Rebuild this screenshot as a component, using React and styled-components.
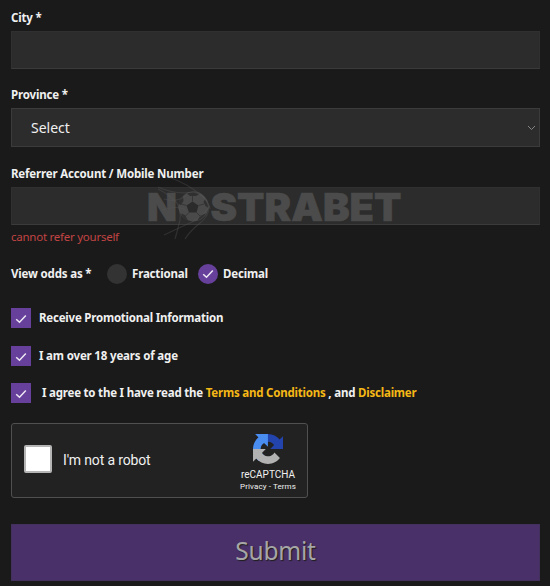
import React, { useState } from "react";
import styled, { createGlobalStyle } from "styled-components";

const GlobalStyle = createGlobalStyle`
    * {
        box-sizing: border-box;
    }

    body {
        margin: 0;
        background: #1A1A1A;
        color: #F0F0F0;
        font-family: "Noto Sans", "Open Sans", sans-serif;
    }
`;

const Form = styled.form`
    position: relative;
    width: 550px;
    height: 586px;
    padding: 9px 10px 0 11px;
    overflow: hidden;
`;

const Text = styled.span`
    display: inline-block;
    font-size: 11.5px;
    font-weight: 700;
    line-height: 18px;
    letter-spacing: ${(p) => p.$track || -0.17}px;
    white-space: pre;
`;

const Field = styled.div`
    display: flex;
    flex-direction: column;
    height: ${(p) => p.$height}px;
`;

const Input = styled.input`
    width: 100%;
    height: 38px;
    margin-top: 4px;
    padding: 0 19px;
    border: 1px solid #303030;
    border-bottom-color: #3B3B3B;
    border-radius: 0;
    background: #2C2C2C;
    color: #F0F0F0;
    outline: none;
`;

const Select = styled.button`
    display: flex;
    align-items: center;
    justify-content: space-between;
    width: 100%;
    height: 39px;
    margin-top: 4px;
    padding: 0 3px 0 19px;
    border: 1px solid #3B3B3B;
    background: #2C2C2C;
    color: #F0F0F0;
    font: 14px/20px "Noto Sans", sans-serif;
`;

const ErrorText = styled(Text)`
    margin-top: 3px;
    color: #C24444;
    font-weight: 400;
`;

const Odds = styled.div`
    display: flex;
    align-items: center;
    height: 20px;

    ${Text} {
        padding-bottom: 1px;
    }
`;

const OddsTitle = styled.div`
    display: flex;
    width: 96px;
`;

const Radio = styled.label`
    display: flex;
    align-items: center;
    gap: 5px;
    width: 91px;
`;

const Dot = styled.span`
    display: flex;
    align-items: center;
    justify-content: center;
    width: 20px;
    height: 20px;
    border-radius: 50%;
    background: ${(p) => (p.$on ? "#66409A" : "#333333")};
`;

const Checks = styled.div`
    display: flex;
    flex-direction: column;
    gap: 18px;
    height: 95px;
    margin-top: 24px;
`;

const Check = styled.div`
    display: flex;
    align-items: center;
    height: 20px;
    gap: ${(p) => p.$gap || 8}px;

    &:last-child {
        margin-top: -1px;
    }
`;

const Box = styled.span`
    display: flex;
    align-items: center;
    justify-content: center;
    width: 20px;
    height: 20px;
    padding-top: 1px;
    background: #66409A;
`;

const Link = styled.span`
    color: #F5B816;
`;

const Captcha = styled.div`
    display: flex;
    align-items: center;
    width: 297px;
    height: 75px;
    margin-top: 20px;
    padding: 0 10px 0 12px;
    border: 1px solid #505050;
    border-radius: 3px;
    background: #222222;
    font-family: Roboto, sans-serif;
`;

const RobotBox = styled.span`
    width: 28px;
    height: 28px;
    margin-top: -3px;
    border: 2px solid #B5B5B5;
    border-radius: 2px;
    background: #FFFFFF;
`;

const RobotLabel = styled.span`
    flex: 1;
    margin-left: 11px;
    padding-bottom: 1px;
    font-size: 14px;
    line-height: 20px;
    letter-spacing: -0.15px;
`;

const Badge = styled.div`
    display: flex;
    flex-direction: column;
    align-items: center;
    width: 58px;
    padding-top: 4px;
    white-space: nowrap;
`;

const BadgeName = styled.span`
    margin-top: 5px;
    font-size: 10px;
    line-height: 12px;
`;

const BadgeTerms = styled.span`
    font-size: 8px;
    line-height: 11px;
    letter-spacing: 0.1px;
`;

const Submit = styled.button`
    display: block;
    width: 100%;
    height: 57px;
    margin-top: 26px;
    padding: 0 0 3px;
    border: 1px solid #43305D;
    background: #4A3069;
    color: #A6A6A6;
    font: 24.5px/52px "Noto Sans", sans-serif;
    letter-spacing: -0.2px;
    text-shadow: 1px 1px 1px #1E1E1E;
`;

const Watermark = styled.svg`
    position: absolute;
    left: 140px;
    top: 175px;
    pointer-events: none;
`;

const Tick = () => (
	<svg width="12" height="10" viewBox="0 0 12 10" fill="none" stroke="#EEE8F5" strokeWidth="1.5">
		<path d="M1.2 5.2 4.5 8.3 10.8 1.6" />
	</svg>
);

const RecaptchaLogo = () => (
	<svg width="30" height="30" viewBox="0 0 64 64">
		<path fill="#2444AD" d="M64 31.955l-.033-1.37V4.687l-7.16 7.16C50.948 4.674 42.033.093 32.05.093c-10.4 0-19.622 4.96-25.458 12.64l11.736 11.86a15.55 15.55 0 0 1 4.754-5.334c2.05-1.6 4.952-2.906 8.968-2.906.485 0 .86.057 1.135.163 4.976.393 9.288 3.14 11.828 7.124l-8.307 8.307L64 31.953" />
		<path fill="#4A8DF0" d="M31.862.094l-1.37.033H4.594l7.16 7.16C4.58 13.147 0 22.06 0 32.046c0 10.4 4.96 19.622 12.64 25.458L24.5 45.768a15.55 15.55 0 0 1-5.334-4.754c-1.6-2.05-2.906-4.952-2.906-8.968 0-.485.057-.86.163-1.135.393-4.976 3.14-9.288 7.124-11.828l8.307 8.307L31.86.095" />
		<path fill="#B2B2B2" d="M.001 32.045l.033 1.37v25.898l7.16-7.16c5.86 7.173 14.774 11.754 24.76 11.754 10.4 0 19.622-4.96 25.458-12.64l-11.736-11.86a15.55 15.55 0 0 1-4.754 5.334c-2.05 1.6-4.952 2.906-8.968 2.906-.485 0-.86-.057-1.135-.163-4.976-.393-9.288-3.14-11.828-7.124l8.307-8.307L0 32.05" />
	</svg>
);

const NostrabetMark = () => (
	<Watermark width="265" height="70" viewBox="0 0 265 70">
		<g fill="#4B4B4B" stroke="#4B4B4B" strokeWidth="0.6" fontFamily="Inter, sans-serif" fontWeight="900" fontSize="38">
			<text x="7" y="46" textLength="30" lengthAdjust="spacingAndGlyphs">N</text>
			<text x="70.5" y="46" textLength="191" lengthAdjust="spacingAndGlyphs">STRABET</text>
		</g>
		<circle cx="53.5" cy="31.5" r="15" fill="#4A4A4A" />
		<path d="M46.5 30.5 52.5 26.5 58.5 30.5 56.5 37.5 49 37.5Z" fill="#2B2B2B" />
		<g fill="#303030">
			<path d="M47 18.5Q53 15.5 60 18.5L56 21H50Z" />
			<path d="M38.5 29Q39 24 43 21.5L43.5 26 41 30Z" />
			<path d="M65 24Q68.5 28 68.5 33L65.5 31 63.5 27Z" />
			<path d="M41 38.5 45 40 48 45.5Q43 43.5 41 38.5Z" />
			<path d="M57.5 45.5 60 40.5 66 38.5Q63 43.5 57.5 45.5Z" />
		</g>
		<g fill="none" stroke="#363636">
			<path d="M52.5 26.5V21M46.5 30.5 41 29M58.5 30.5 64 29M49 37.5 45.5 41M56.5 37.5 60 41" />
		</g>
		<g fill="none" stroke="#5A5A5A" strokeOpacity="0.35" strokeWidth="1.2">
			<path d="M28 2Q50 9 64 23Q75 36 60 48Q50 56 45 64" />
			<path d="M18 12Q35 20 54 17Q67 20 70 34" />
			<path d="M24 24Q35 28 46 21" />
			<path d="M22 35Q38 30 45 35" />
			<path d="M24 60Q41 52 52 47Q64 40 70 31" />
			<path d="M35 64Q38 54 40 45Q41 36 37 28Q30 20 18 14" />
		</g>
	</Watermark>
);

const App = () => {
	const [odds, setOdds] = useState("decimal");

	return (
		<Form>
			<GlobalStyle />
			<Field $height={77}>
				<Text>City *</Text>
				<Input />
			</Field>
			<Field $height={79}>
				<Text>Province *</Text>
				<Select type="button">
					Select
					<svg width="9" height="6" viewBox="0 0 9 6" fill="none" stroke="#858585">
						<path d="M1 1 4.5 4.5 8 1" />
					</svg>
				</Select>
			</Field>
			<Field $height={99}>
				<Text>Referrer Account / Mobile Number</Text>
				<Input />
				<ErrorText $track={-0.25}>cannot refer yourself</ErrorText>
			</Field>

			<Odds>
				<OddsTitle><Text>View odds as *</Text></OddsTitle>
				<Radio onClick={() => setOdds("fractional")}>
					<Dot $on={odds === "fractional"}>{odds === "fractional" && <Tick />}</Dot>
					<Text>Fractional</Text>
				</Radio>
				<Radio onClick={() => setOdds("decimal")}>
					<Dot $on={odds === "decimal"}>{odds === "decimal" && <Tick />}</Dot>
					<Text>Decimal</Text>
				</Radio>
			</Odds>

			<Checks>
				<Check>
					<Box><Tick /></Box>
					<Text $track={-0.22}>Receive Promotional Information</Text>
				</Check>
				<Check>
					<Box><Tick /></Box>
					<Text>I am over 18 years of age</Text>
				</Check>
				<Check $gap={11}>
					<Box><Tick /></Box>
					<Text $track={-0.21}>
						I agree to the I have read the <Link>Terms and Conditions</Link> , and <Link>Disclaimer</Link>
					</Text>
				</Check>
			</Checks>

			<Captcha>
				<RobotBox />
				<RobotLabel>I'm not a robot</RobotLabel>
				<Badge>
					<RecaptchaLogo />
					<BadgeName>reCAPTCHA</BadgeName>
					<BadgeTerms>Privacy - Terms</BadgeTerms>
				</Badge>
			</Captcha>

			<Submit type="button">Submit</Submit>
			<NostrabetMark />
		</Form>
	);
};

export default App;
